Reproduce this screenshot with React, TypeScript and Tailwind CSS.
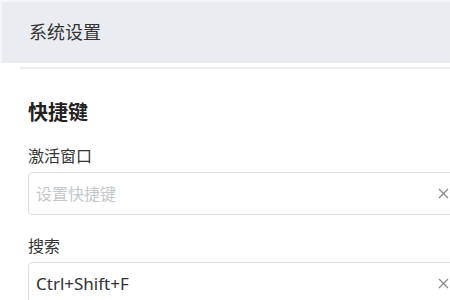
import React from "react";

function ClearIcon() {
  return (
    <svg width="11" height="11" viewBox="0 0 11 11" className="shrink-0">
      <path d="M1 1 L10 10 M10 1 L1 10" stroke="#8a8a8a" strokeWidth="1.3" fill="none" />
    </svg>
  );
}

function ShortcutInput({ value, placeholder }: { value?: string; placeholder?: string }) {
  return (
    <div className="flex h-[43px] w-[434px] items-center rounded-[4px] border border-[#dcdfe6] bg-white pl-[7px] pr-[12px]">
      <div className={`flex-1 ${value ? "text-[17px] text-[#303133]" : "text-[16px] text-[#c4c7cc]"}`}>
        {value ?? placeholder}
      </div>
      <ClearIcon />
    </div>
  );
}

export default function App() {
  return (
    <div
      className="h-[300px] w-[450px] overflow-hidden bg-white"
      style={{ fontFamily: '"Noto Sans", "Noto Sans CJK SC", sans-serif' }}
    >
      <div className="flex h-[63px] items-center border-l-2 border-t-2 border-[#f4f6f8] bg-[#e9ecf0]">
        <span className="ml-[27px] text-[18px] text-[#333]">系统设置</span>
      </div>
      <div className="ml-[20px] mt-[4px] h-[2px] bg-[#ebedf0]" />
      <div className="pl-[28px]">
        <div className="mt-[30px] text-[20px] font-bold leading-[28px] text-[#222]">快捷键</div>
        <div className="mt-[17px] text-[16px] leading-[24px] text-[#333]">激活窗口</div>
        <div className="mt-[4px]">
          <ShortcutInput placeholder="设置快捷键" />
        </div>
        <div className="mt-[19px] text-[16px] leading-[24px] text-[#333]">搜索</div>
        <div className="mt-[4px]">
          <ShortcutInput value="Ctrl+Shift+F" />
        </div>
      </div>
    </div>
  );
}
